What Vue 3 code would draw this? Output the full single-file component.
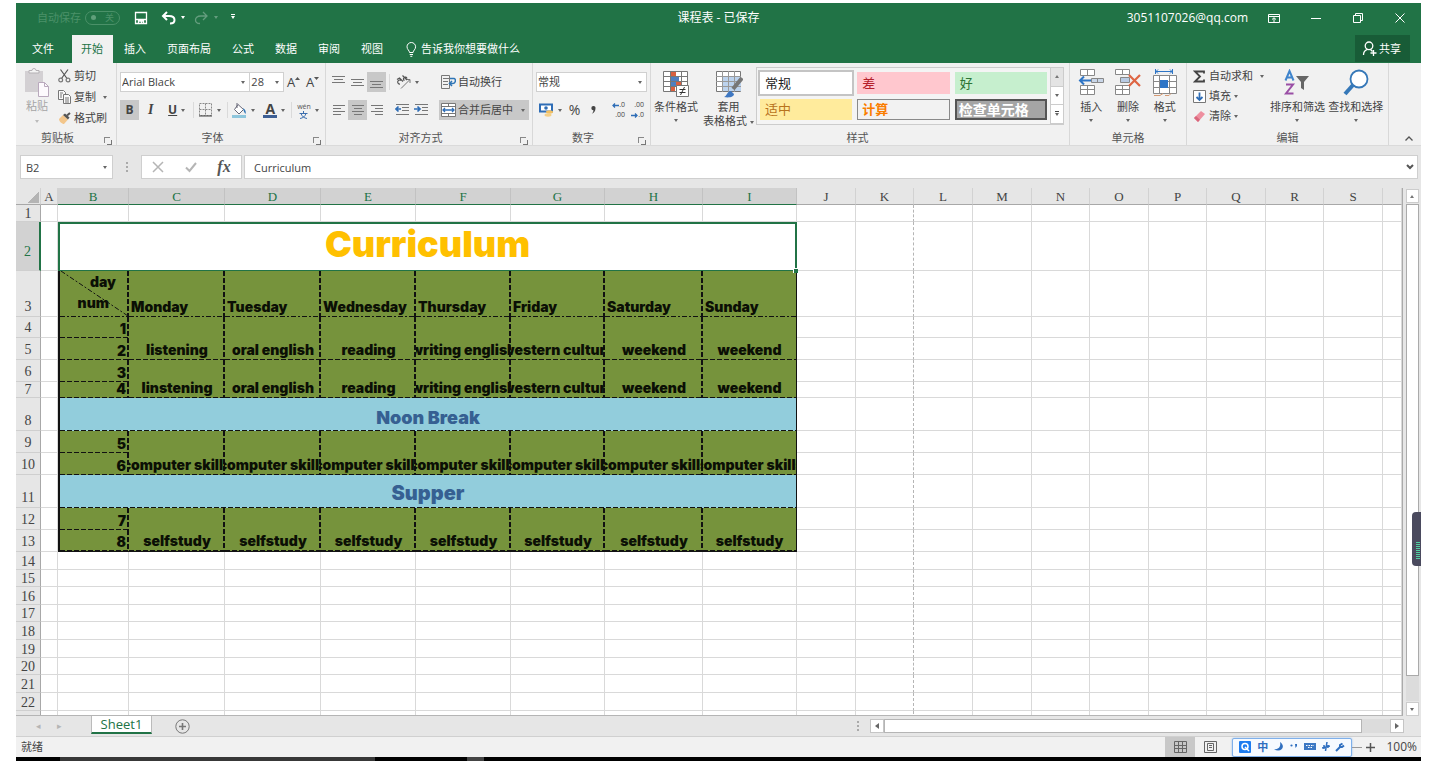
<script setup>
const cols = [
  ['', 25], ['A', 17], ['B', 71], ['C', 96], ['D', 96], ['E', 95], ['F', 95], ['G', 94], ['H', 98], ['I', 94],
  ['J', 59], ['K', 58], ['L', 59], ['M', 59], ['N', 58], ['O', 59], ['P', 58], ['Q', 59], ['R', 58], ['S', 59], ['', 0],
].map(([name, width], i) => ({ name, width, selected: i >= 2 && i <= 9 }))

const week = (list) => list.map((text) => ({ text, rowspan: 2, kind: 'green center' }))
const num = (n, last) => ({ text: n, kind: 'green number' + (last ? ' last' : '') })
const lessons = (first) => week([first, 'oral english', 'reading', 'writing english', 'western culture', 'weekend', 'weekend'])
const all = (t) => week(Array(7).fill(t))
const days = ['Monday', 'Tuesday', 'Wednesday', 'Thursday', 'Friday', 'Saturday', 'Sunday']

const content = {
  2: [{ text: 'Curriculum', colspan: 8, kind: 'title' }],
  3: [{ corner: true, kind: 'green corner' }, ...days.map((text) => ({ text, kind: 'green day' }))],
  4: [num(1), ...lessons('listening')],
  5: [num(2, true)],
  6: [num(3), ...lessons('linstening')],
  7: [num(4, true)],
  8: [{ text: 'Noon Break', colspan: 8, kind: 'break noon' }],
  9: [num(5), ...all('computer skills')],
  10: [num(6, true)],
  11: [{ text: 'Supper', colspan: 8, kind: 'break supper' }],
  12: [num(7), ...all('selfstudy')],
  13: [num(8, true)],
}
const heights = [17, 49, 46, 21, 22, 22, 16, 33, 22, 22, 33, 22, 22, 18, 17, 18, 17, 18, 18, 17, 18, 18, 18]
const rows = heights.map((height, i) => ({
  n: i + 1,
  height,
  cells: content[i + 1] || [],
  lead: content[i + 1] ? 0 : 8,
}))

const tabs = ['插入', '页面布局', '公式', '数据', '审阅', '视图']
const styles = [
  ['常规', 'normal'], ['差', 'bad'], ['好', 'good'],
  ['适中', 'neutral'], ['计算', 'calc'], ['检查单元格', 'check'],
]
</script>

<template>
  <div class="screen">
    <div class="app">
      <header class="titlebar">
        <div class="quick">
          <span class="faint">自动保存</span>
          <button class="toggle" aria-label="自动保存"><i></i><b>关</b></button>
          <button aria-label="保存" class="save">
            <svg width="14" height="14" viewBox="0 0 14 14" fill="none" stroke="#fff" stroke-width="1.3"><path d="M1.500 1.500h11v11h-11zM1.500 8.500h11M4.500 12v-2h5v2M7.500 10v2" /></svg>
          </button>
          <button aria-label="撤消" class="undo">
            <svg width="15" height="14" viewBox="0 0 15 14" fill="none" stroke="#fff" stroke-width="2"><path d="M6 1L2 5l4 4M2 5h6c4 0 5.500 2 5.500 4S12 12.500 9 12.500" /></svg>
            <i class="caret white"></i>
          </button>
          <button aria-label="恢复" class="undo dim">
            <svg width="15" height="14" viewBox="0 0 15 14" fill="none" stroke="#fff" stroke-width="1.300"><path d="M9 1l4 4-4 4M13 5H7C3 5 1.500 7 1.500 9S3 12.500 6 12.500" /></svg>
            <i class="caret white"></i>
          </button>
          <button aria-label="自定义快速访问工具栏" class="more"><i class="caret white bar"></i></button>
        </div>
        <div class="doc">课程表 - 已保存</div>
        <div class="account">
          <span class="mail">3051107026@qq.com</span>
          <button aria-label="功能区显示选项"><svg width="12" height="10" viewBox="0 0 12 10" fill="none" stroke="#fff"><path d="M.5 1.500h11v8H.5zM.5 3.500h11M6 9V5M4 6.500L6 4.700l2 1.800" /></svg></button>
          <button aria-label="最小化"><svg width="10" height="10" viewBox="0 0 10 10" stroke="#fff"><path d="M0 5.500h10" /></svg></button>
          <button aria-label="还原"><svg width="10" height="10" viewBox="0 0 10 10" fill="none" stroke="#fff"><path d="M.5 2.500h7v7h-7zM2.500 2.500v-2h7v7h-2" /></svg></button>
          <button aria-label="关闭"><svg width="10" height="10" viewBox="0 0 10 10" stroke="#fff"><path d="M.5.500l9 9M9.500.500l-9 9" /></svg></button>
        </div>
      </header>

      <nav class="tabs">
        <button class="file">文件</button>
        <button class="active">开始</button>
        <button v-for="t in tabs" :key="t">{{ t }}</button>
        <button class="tell">
          <svg width="11" height="15" viewBox="0 0 11 15" fill="none" stroke="#fff"><path d="M3.500 10.500C3.500 8.500 1 7.500 1 4.800a4.300 4.300 0 018.600 0c0 2.700-2.500 3.700-2.500 5.700zM3.700 12.500h3.300M4.300 14.300h2" /></svg>
          告诉我你想要做什么
        </button>
        <button class="share">
          <svg width="15" height="15" viewBox="0 0 15 15" fill="none" stroke="#fff" stroke-width="1.300"><circle cx="7" cy="4.800" r="3.800" /><path d="M1.500 14c0-3 2-5 4-5.600M8.500 8.500l2 2M11.500 9v6M8.500 12h6" /></svg>
          共享
        </button>
      </nav>

      <section class="ribbon">
        <div class="group clip">
          <div class="body">
            <button class="big paste">
              <svg width="26" height="30" viewBox="0 0 26 30"><path d="M1 3h18v21H1z" fill="#d3d0d3" /><path d="M5 5V2.500h3a2 2 0 014 0h3V5z" fill="#f4f4f4" stroke="#b5b1b5" /><path d="M14.500 14.500h6l4 4v10h-10z" fill="#fdfafd" stroke="#b9a9bd" /><path d="M20.500 14.500v4h4" fill="none" stroke="#b9a9bd" /></svg>
              <span>粘贴</span><i class="caret"></i>
            </button>
            <div class="stack">
              <button><svg width="13" height="14" viewBox="0 0 13 14" fill="none" stroke="#555" stroke-width="1.200"><path d="M2.500.500l6.500 9M10 .500L3.500 9.500" /><circle cx="2.700" cy="11" r="1.900" stroke="#777" /><circle cx="10" cy="11" r="1.900" stroke="#777" /></svg>剪切</button>
              <button><svg width="13" height="14" viewBox="0 0 13 14" fill="#fafafa" stroke="#777"><path d="M.5.500h5l2 2v7h-7z" /><path d="M5.500 4.500h5l2 2v7h-7z" /><path d="M7 8h4M7 10h4M7 12h4M2 3h3M2 5h2M2 7h2" /></svg>复制<i class="caret far"></i></button>
              <button><svg width="13" height="13" viewBox="0 0 13 13"><path d="M1 7l4-4 5 4.500L6 12C4 12 1 9.500 1 7z" fill="#f3c68b" /><path d="M5 3l2-1.500 4.500 4L10 7.500z" fill="#555" /><path d="M9 3.500L12 1" stroke="#555" stroke-width="2" /></svg>格式刷</button>
            </div>
          </div>
          <footer class="has-launch">剪贴板<i class="launch"></i></footer>
        </div>

        <div class="group font">
          <div class="body col">
            <div class="line">
              <span class="pick wide"><select aria-label="字体"><option>Arial Black</option></select><i class="caret"></i></span>
              <span class="pick small"><select aria-label="字号"><option>28</option></select><i class="caret"></i></span>
              <button class="sz" aria-label="增大字号">A<svg width="5" height="4" viewBox="0 0 5 4"><path d="M0 3L2.500 0 5 3z" fill="#555" /></svg></button>
              <button class="sz" aria-label="减小字号">A<svg width="5" height="4" viewBox="0 0 5 4"><path d="M0 0L2.500 3 5 0z" fill="#555" /></svg></button>
            </div>
            <div class="line second">
              <button class="tool on"><b>B</b></button>
              <button class="tool"><em>I</em></button>
              <button class="tool with"><u>U</u><i class="caret"></i></button>
              <i class="sep"></i>
              <button class="tool with" aria-label="边框"><svg width="14" height="14" viewBox="0 0 14 14" fill="none" stroke="#888"><path d="M.5.500h12v12H.5zM6.500.500v12M.5 6.500h12" stroke-dasharray="2 1" /><path d="M0 13h13" stroke="#444" /></svg><i class="caret"></i></button>
              <i class="sep"></i>
              <button class="tool with" aria-label="填充颜色"><svg width="15" height="15" viewBox="0 0 15 15"><path d="M6 1.500l5.500 5L7 11 2.500 6.500z" fill="#fff" stroke="#667" /><path d="M5 0v5" stroke="#667" /><path d="M11 5c3 2 3 4 2.500 6-1-1-2-3-2.500-6z" fill="#2e75b6" /><path d="M0 12h14v3H0z" fill="#8ec6dc" /></svg><i class="caret"></i></button>
              <button class="tool with" aria-label="字体颜色"><span class="fc">A</span><i class="caret"></i></button>
              <i class="sep"></i>
              <button class="tool with" aria-label="拼音"><span class="py"><small>wén</small><svg width="9" height="8" viewBox="0 0 9 8" fill="none" stroke="#3c6eae"><path d="M4.500 0v2M.5 2.500h8M2 2.500c1 3 3 4.500 6 5M7 2.500c-1 3-3 4.500-6 5" /></svg></span><i class="caret"></i></button>
            </div>
          </div>
          <footer class="has-launch">字体<i class="launch"></i></footer>
        </div>

        <div class="group align">
          <div class="body col">
            <div class="line">
              <button class="tool" aria-label="顶端对齐"><svg width="13" height="14" viewBox="0 0 13 14" stroke="#777"><path d="M0 1.500h13M2 4.500h9M0 7.500h13" /></svg></button>
              <button class="tool" aria-label="垂直居中"><svg width="13" height="14" viewBox="0 0 13 14" stroke="#777"><path d="M0 4.500h13M2 7.500h9M0 10.500h13" /></svg></button>
              <button class="tool on" aria-label="底端对齐"><svg width="13" height="14" viewBox="0 0 13 14" stroke="#777"><path d="M0 6.500h13M2 9.500h9M0 12.500h13" /></svg></button>
              <i class="sep"></i>
              <button class="tool with orient" aria-label="方向"><svg width="15" height="14" viewBox="0 0 15 14" fill="none" stroke="#555"><path d="M5 13.500L13.500 5M10.500 4.500h3.500V8" stroke="#777" /><path d="M1 4.500l2.500-1.500 3.500 3.500M5 5.500a2 2 0 10-1 3.500M6.500.500l4.500 4.500M8.500 5.500a1.800 1.800 0 112.500-2" stroke-width="1.200" /></svg><i class="caret"></i></button>
              <button class="text wrap"><svg width="15" height="14" viewBox="0 0 15 14" fill="none"><path d="M.5.500h8v13h-8zM2 3.500h8M2 6.500h5M2 9.500h5" stroke="#777" /><path d="M9 3.500h4c2 0 2 5-1 5H9M11 6L8.500 8.500 11 11" stroke="#2e75b6" stroke-width="1.500" /></svg>自动换行</button>
            </div>
            <div class="line second">
              <button class="tool" aria-label="左对齐"><svg width="12" height="14" viewBox="0 0 12 14" stroke="#777"><path d="M0 2.500h12M0 5.500h8M0 8.500h12M0 11.500h8" /></svg></button>
              <button class="tool on" aria-label="居中"><svg width="12" height="14" viewBox="0 0 12 14" stroke="#777"><path d="M0 2.500h12M2 5.500h8M0 8.500h12M2 11.500h8" /></svg></button>
              <button class="tool" aria-label="右对齐"><svg width="12" height="14" viewBox="0 0 12 14" stroke="#777"><path d="M0 2.500h12M4 5.500h8M0 8.500h12M4 11.500h8" /></svg></button>
              <i class="sep"></i>
              <button class="tool" aria-label="减少缩进"><svg width="14" height="14" viewBox="0 0 14 14" fill="none" stroke="#777"><path d="M1 1.500h13M7 4.500h7M7 7.500h7M1 11.500h13" /><path d="M6 6H1M3.500 3.500L1 6l2.500 2.500" stroke="#2e6db6" stroke-width="1.700" /></svg></button>
              <button class="tool" aria-label="增加缩进"><svg width="14" height="14" viewBox="0 0 14 14" fill="none" stroke="#777"><path d="M1 1.500h13M8 4.500h6M8 7.500h6M1 11.500h13" /><path d="M0 6h6M3.500 3.500L6 6 3.500 8.500" stroke="#2e6db6" stroke-width="1.700" /></svg></button>
              <button class="text merge"><svg width="15" height="14" viewBox="0 0 15 14"><path d="M.5.500h14v13H.5z" fill="#fff" stroke="#777" /><path d="M7.500.500V4M7.500 10v3.500M.5 3.500h14M.5 10.500h14" stroke="#777" /><path d="M2 7h11M4 5L2 7l2 2M11 5l2 2-2 2" fill="none" stroke="#2e6db6" stroke-width="1.300" /></svg>合并后居中<i class="caret"></i></button>
            </div>
          </div>
          <footer class="has-launch">对齐方式<i class="launch"></i></footer>
        </div>

        <div class="group number-group">
          <div class="body col">
            <div class="line"><span class="pick full"><select aria-label="数字格式"><option>常规</option></select><i class="caret"></i></span></div>
            <div class="line second">
              <button class="tool with" aria-label="会计数字格式"><svg width="15" height="14" viewBox="0 0 15 14"><path d="M1 1.500h12v7H1z" fill="#fff" stroke="#2e6db6" stroke-width="2" /><circle cx="7" cy="5" r="1.800" fill="#2e6db6" /><ellipse cx="10.500" cy="9" rx="3.500" ry="1.700" fill="#f2c063" /><ellipse cx="9" cy="12" rx="3.500" ry="1.700" fill="#f5cf87" /></svg><i class="caret"></i></button>
              <button class="tool pct">%</button>
              <button class="tool" aria-label="千位分隔样式"><svg width="5" height="8" viewBox="0 0 5 8"><path d="M2.500 0a2 2 0 012 2.300C4.500 5 3 7 .8 7.800 2 6.500 2.500 5.500 2.400 4.200A2 2 0 012.500 0z" fill="#444" /></svg></button>
              <i class="sep"></i>
              <button class="tool dec"><span><svg width="7" height="5" viewBox="0 0 7 5" fill="none" stroke="#2e6db6" stroke-width="1.300"><path d="M7 2.500H1M3 .5l-2 2 2 2" /></svg>.0</span><span>.00</span></button>
              <button class="tool dec"><span>.00</span><span><svg width="7" height="5" viewBox="0 0 7 5" fill="none" stroke="#2e6db6" stroke-width="1.300"><path d="M0 2.500h6M4 .5l2 2-2 2" /></svg>.0</span></button>
            </div>
          </div>
          <footer class="has-launch">数字<i class="launch"></i></footer>
        </div>

        <div class="group style-group">
          <div class="body">
            <button class="big cond">
              <svg width="28" height="28" viewBox="0 0 28 28"><path d="M1.500 1.500h24v20h-24z" fill="#fff" stroke="#777" /><path d="M1 6.500h24M1 11.500h24M1 16.500h24M8.500 1v21M19.500 1v21" stroke="#777" /><path d="M9 2h5v4H9zM14 12h5v4h-5zM9 17h4v4H9z" fill="#d9603f" /><path d="M9 7h8v4H9zM9 12h5v4H9z" fill="#4f7fc0" /><path d="M14.500 15.500h12v11h-12z" fill="#fff" stroke="#777" /><path d="M17.500 19.500h6M17.500 22.500h6M22.500 17l-4 8" stroke="#333" /></svg>
              <span>条件格式</span><i class="caret"></i>
            </button>
            <button class="big tablefmt">
              <svg width="28" height="28" viewBox="0 0 28 28"><path d="M1.500 1.500h24v20h-24z" fill="#fff" stroke="#777" /><path d="M8 6h18v15H8z" fill="#bcd3ee" /><path d="M1 6.500h25M1 11.500h25M1 16.500h25M7.500 1v21M13.500 1v21M19.500 1v21" stroke="#999" /><path d="M27 8L18 19" stroke="#777" stroke-width="4" /><path d="M9 27c3-1 3-6 7-6l3 3c0 3-5 4-10 3z" fill="#3f78c2" /></svg>
              <span>套用<br />表格格式<i class="caret"></i></span>
            </button>
            <div class="gallery">
              <div class="swatches"><button v-for="s in styles" :key="s[1]" :class="s[1]">{{ s[0] }}</button></div>
              <div class="gscroll"><button aria-label="上"><i class="caret up"></i></button><button aria-label="下"><i class="caret"></i></button><button aria-label="其他"><i class="caret bar"></i></button></div>
            </div>
          </div>
          <footer>样式</footer>
        </div>

        <div class="group cells">
          <div class="body">
            <button class="big"><svg width="28" height="28" viewBox="0 0 28 28" fill="none" stroke="#888"><path d="M3.500.500h14v6h-14zM10.500.500v6M3.500 16.500h14v9h-14zM10.500 16.500v9M3.500 20.500h14" fill="#fff" /><path d="M14.500 9.500h12v4h-12zM20.500 9.500v4" fill="#c9d6e8" /><path d="M14 11.500H3M7 7.500l-4 4 4 4" stroke="#2e75c6" stroke-width="2" /></svg><span>插入</span><i class="caret"></i></button>
            <button class="big"><svg width="28" height="28" viewBox="0 0 28 28" fill="none" stroke="#888"><path d="M1.500.500h14v5h-14zM8.500.500v5M1.500 16.500h14v9h-14zM8.500 16.500v9M1.500 20.500h14" fill="#fff" /><path d="M6.500 8.500h9v5h-9z" fill="#b8cbe4" /><path d="M15 6l11 11M26 6L15 17" stroke="#de6543" stroke-width="2.200" /></svg><span>删除</span><i class="caret"></i></button>
            <button class="big"><svg width="28" height="28" viewBox="0 0 28 28" fill="none" stroke="#888"><path d="M2.500 6.500h23v18h-23zM8.500 6.500v18M18.500 6.500v18M2.500 12.500h23M2.500 18.500h23" fill="#fff" /><path d="M9 11h8v8H9z" fill="#2e75c6" stroke="none" /><path d="M4 2.500h18M4.500 0v5M21.500 0v5M7 .500l-2 2 2 2M19 .500l2 2-2 2" stroke="#2e75c6" /><path d="M3 26.500h6l3-2M14 26.500h4l2-2" stroke="#d79a72" /></svg><span>格式</span><i class="caret"></i></button>
          </div>
          <footer>单元格</footer>
        </div>

        <div class="group edit">
          <div class="body">
            <div class="stack">
              <button><svg width="13" height="13" viewBox="0 0 13 13" fill="none" stroke="#444" stroke-width="1.800"><path d="M11 3.500V1.500H2l5 5-5 5h9v-2" /></svg>自动求和<i class="caret far"></i></button>
              <button><svg width="13" height="13" viewBox="0 0 13 13" fill="#fff" stroke="#777"><path d="M.5.500h12v12H.5z" /><path d="M6.500 2.500v7M3.500 7l3 3 3-3" fill="none" stroke="#2e6db6" stroke-width="1.800" /></svg>填充<i class="caret"></i></button>
              <button><svg width="13" height="13" viewBox="0 0 13 13"><path d="M1 8l7-7 4 3-7 8z" fill="#ee8f9f" /><path d="M1 8l2-2 4 3.700L5 12z" fill="#d9667c" /></svg>清除<i class="caret"></i></button>
            </div>
            <button class="big sort"><svg width="28" height="28" viewBox="0 0 28 28" fill="none"><path d="M2.500 11.500L6.500 2l4 9.500M4 8.500h5" stroke="#3f84cc" stroke-width="2" /><path d="M3 15.500h7l-7 9h7.500" stroke="#9a4fa5" stroke-width="2" /><path d="M13 7h13l-5 6v8l-3-2v-6z" fill="#666" /></svg><span>排序和筛选</span><i class="caret"></i></button>
            <button class="big find"><svg width="28" height="28" viewBox="0 0 28 28" fill="none" stroke="#3678b8"><circle cx="17" cy="10" r="8.500" fill="#fff" stroke-width="1.800" /><path d="M11 16L3 25" stroke-width="4" /></svg><span>查找和选择</span><i class="caret"></i></button>
          </div>
          <footer>编辑</footer>
        </div>
        <button class="collapse" aria-label="折叠功能区"><svg width="8" height="5" viewBox="0 0 8 5" fill="none" stroke="#555" stroke-width="1.300"><path d="M.5 4.500L4 1l3.500 3.500" /></svg></button>
      </section>

      <section class="formula">
        <span class="pick namebox"><input aria-label="名称框" value="B2" /><i class="caret"></i></span>
        <i class="dots"></i>
        <div class="fx">
          <button aria-label="取消"><svg width="12" height="12" viewBox="0 0 12 12" stroke="#b5b5b5" stroke-width="1.500"><path d="M1 1l10 10M11 1L1 11" /></svg></button>
          <button aria-label="输入"><svg width="12" height="12" viewBox="0 0 12 12" fill="none" stroke="#b5b5b5" stroke-width="2"><path d="M1 6.500L4.500 10 11 2" /></svg></button>
          <button class="fn">fx</button>
        </div>
        <span class="pick content"><input aria-label="编辑栏" value="Curriculum" /><svg width="8" height="6" viewBox="0 0 8 6" fill="none" stroke="#555" stroke-width="2"><path d="M1 1l3 3 3-3" /></svg></span>
      </section>

      <main class="sheet">
        <div class="view">
          <table>
            <colgroup><col v-for="(c, i) in cols" :key="i" :style="c.width ? { width: c.width + 'px' } : {}" /></colgroup>
            <thead>
              <tr><th v-for="(c, i) in cols" :key="i" :class="{ sel: c.selected, all: i === 0 }">{{ c.name }}</th></tr>
            </thead>
            <tbody>
              <tr v-for="r in rows" :key="r.n" :style="{ height: r.height + 'px' }">
                <th :class="{ sel: r.n === 2, tall: r.height > 20 }"><div>{{ r.n }}</div></th>
                <td></td>
                <td v-for="(c, i) in r.cells" :key="'c' + i" :class="c.kind" :colspan="c.colspan" :rowspan="c.rowspan">
                  <template v-if="c.corner">
                    <svg class="diag" viewBox="0 0 71 46" preserveAspectRatio="none"><path d="M1 0L70 45" stroke="#111" stroke-dasharray="5 2 2 2" /></svg>
                    <div class="top">day</div><div class="low">num</div>
                  </template>
                  <div v-else class="txt"><span>{{ c.text }}</span></div>
                  <i v-if="r.n === 2" class="handle"></i>
                </td>
                <td v-for="k in r.lead" :key="'l' + k"></td>
                <td v-for="k in 11" :key="'t' + k" :class="{ page: k === 2 }"></td>
              </tr>
            </tbody>
          </table>
        </div>
        <div class="vscroll">
          <button aria-label="向上滚动"><i class="caret up"></i></button>
          <div class="track"><div class="thumb"></div></div>
          <button aria-label="向下滚动"><i class="caret"></i></button>
        </div>
        <div class="dock"><i></i></div>
      </main>

      <div class="sheetbar">
        <button class="nav" aria-label="上一张">◂</button>
        <button class="nav" aria-label="下一张">▸</button>
        <button class="sheettab">Sheet1</button>
        <button class="add" aria-label="新工作表"><svg width="15" height="15" viewBox="0 0 15 15" fill="none" stroke="#777"><circle cx="7.500" cy="7.500" r="6.700" /><path d="M7.500 4v7M4 7.500h7" stroke-width="1.600" /></svg></button>
        <div class="hscroll">
          <i class="dots"></i>
          <button aria-label="向左滚动"><i class="caret left"></i></button>
          <div class="hthumb"></div><div class="htrack"></div>
          <button aria-label="向右滚动"><i class="caret right"></i></button>
        </div>
      </div>

      <div class="status">
        <span>就绪</span>
        <div class="views">
          <button class="on" aria-label="普通"><svg width="13" height="12" viewBox="0 0 13 12" fill="none" stroke="#666"><path d="M.5.500h12v11H.5zM4.500.500v11M8.500.500v11M.5 4.500h12M.5 7.500h12" /></svg></button>
          <button aria-label="页面布局"><svg width="13" height="12" viewBox="0 0 13 12" fill="none" stroke="#666"><path d="M.5.500h12v11H.5zM3.500 2.500h6v7h-6zM5 4.500h3M5 6.500h3" /></svg></button>
        </div>
        <div class="ime">
          <svg width="12" height="12" viewBox="0 0 12 12"><rect width="12" height="12" rx="1" fill="#1d7cf0" /><circle cx="6" cy="5.500" r="3" fill="none" stroke="#fff" stroke-width="1.500" /><path d="M6 6l4 4" stroke="#fff" stroke-width="1.500" /></svg>
          <b>中</b>
          <svg width="10" height="10" viewBox="0 0 10 10"><path d="M6 0c6 4 2 11-6 7.500 5 0 7-3 6-7.500z" fill="#2f6fc0" /></svg>
          <svg width="8" height="10" viewBox="0 0 8 10" fill="#2f6fc0"><circle cx="1.500" cy="3.500" r="1.100" /><path d="M5 2h2v2L5.500 6z" /></svg>
          <svg width="12" height="10" viewBox="0 0 12 10"><path d="M0 1h12v7H0z" fill="#3c78c4" /><path d="M2 3.500h8M4 5.500h4" stroke="#fff" stroke-dasharray="1.500 1" /></svg>
          <svg width="8" height="10" viewBox="0 0 8 10" fill="none" stroke="#2f6fc0" stroke-width="1.500"><path d="M5 0L3.500 9M0 6l8-2M2 3v4M6 3v3" /></svg>
          <svg width="10" height="10" viewBox="0 0 10 10" fill="none" stroke="#2f6fc0" stroke-width="2"><path d="M1 9l4-4" /><path d="M7.500 1.500L5 3v2h2l2-1.500" /></svg>
        </div>
        <i class="rail"></i>
        <button class="plus" aria-label="放大"><svg width="9" height="9" viewBox="0 0 9 9" stroke="#555" stroke-width="1.500"><path d="M4.500 0v9M0 4.500h9" /></svg></button>
        <span class="zoom">100%</span>
      </div>
      <div class="taskbar"><i class="w1"></i><i class="w2"></i><i class="w3"></i><i class="w4"></i></div>
    </div>
  </div>
</template>

<style>
body { background: #fff; }
</style>

<style scoped>
* { box-sizing: border-box; }
.screen { height: 100vh; padding: 3px 11px 0 16px; }
.app { height: 100%; display: flex; flex-direction: column; overflow: hidden; font: 11px/14px "Open Sans", "Noto Sans CJK SC", sans-serif; color: #444; background: #e6e6e6; }
button { border: 0; padding: 0; margin: 0; background: none; font: inherit; color: inherit; display: flex; align-items: center; justify-content: center; white-space: nowrap; }
svg { display: block; flex: none; }
select, input { border: 0; outline: 0; background: none; appearance: none; padding: 0; margin: 0; font: inherit; color: #444; flex: 1; min-width: 0; height: 100%; }
.caret { width: 0; height: 0; flex: none; border: 2px solid transparent; border-top: 3px solid #666; border-bottom: 0; }
.caret.white { border-top-color: #fff; }
.caret.up { border-top: 0; border-bottom: 3px solid #777; }
.caret.left { border: 3px solid transparent; border-left: 0; border-right: 4px solid #666; }
.caret.right { border: 3px solid transparent; border-right: 0; border-left: 4px solid #666; }
.caret.bar { position: relative; }
.caret.bar::before { content: ""; position: absolute; left: -2px; top: -5px; width: 4px; height: 1px; background: currentColor; }

.titlebar { flex: none; height: 32px; background: #217346; color: #fff; display: grid; grid-template-columns: 1fr auto 1fr; align-items: center; padding-bottom: 3px; }
.quick { display: flex; align-items: center; padding-left: 21px; }
.faint { color: #4b9169; width: 48px; }
.toggle { width: 35px; height: 14px; border: 1px solid #4b9169; border-radius: 7px; justify-content: space-between; padding: 0 5px; color: #4b9169; font-size: 9px; }
.toggle i { width: 5px; height: 5px; border-radius: 50%; background: #5f9f7a; }
.toggle b { font-weight: 400; }
.save { margin-left: 14px; }
.undo { margin-left: 14px; gap: 5px; width: 24px; }
.save + .undo { margin-left: 13px; }
.undo.dim { opacity: .3; margin-left: 9px; }
.more { margin-left: 13px; }
.doc { font-size: 12px; }
.account { display: flex; justify-content: flex-end; align-items: center; font-size: 12px; padding-right: 15px; }
.account button { width: 12px; height: 14px; margin-left: 30px; }
.account .mail + button { margin-left: 20px; }

.tabs { flex: none; height: 28px; background: #217346; color: #fff; display: flex; align-items: stretch; }
.tabs button { padding: 0 10px 0 11px; }
.tabs .file { padding: 0 18px 0 16px; }
.tabs .active { background: #f1f1f1; color: #217346; padding: 0 10px 0 9px; }
.tabs .tell { gap: 4px; padding-left: 13px; }
.tabs .share { margin: 0 11px 1px auto; background: #185c37; padding: 0 9px 0 7px; gap: 2px; }

.ribbon { flex: none; height: 83px; background: #f1f1f1; border-bottom: 1px solid #dadada; display: flex; position: relative; }
.group { flex: none; display: flex; flex-direction: column; border-right: 1px solid #d8d8d8; padding: 4px 3px 0; }
.group footer { position: relative; height: 14px; margin-top: auto; text-align: center; color: #555; }
.group .has-launch { padding-right: 17px; }
.launch { position: absolute; right: 3px; bottom: 2px; width: 6px; height: 6px; border: solid #888; border-width: 1px 0 0 1px; }
.launch::after { content: ""; position: absolute; left: 2px; top: 2px; width: 4px; height: 4px; border: solid #777; border-width: 0 1px 1px 0; }
.body { display: flex; height: 60px; }
.body.col { flex-direction: column; padding-top: 5px; }
.line { display: flex; height: 20px; align-items: center; }
.line.second { margin-top: 8px; }
.clip { width: 101px; }
.font { width: 209px; }
.align { width: 207px; }
.number-group { width: 118px; }
.style-group { flex: 1 1 418px; padding: 4px 5px 0 0; }
.cells { width: 117px; }
.edit { width: 202px; }
.big { flex-direction: column; justify-content: flex-start; padding-top: 2px; }
.big span { text-align: center; margin: 3px 0 5px; line-height: 14px; }
.paste { width: 36px; color: #a5a5a5; }
.paste span { margin-top: 1px; margin-bottom: 7px; }
.paste svg { margin-top: -1px; }
.paste .caret { border-top-color: #bbb; }
.stack { display: flex; flex-direction: column; justify-content: space-between; height: 54px; margin: 2px 0 0 3px; }
.clip .stack { height: 56px; }
.stack button { justify-content: flex-start; gap: 3px; }
.stack .far { margin-left: 4px; }
.pick { display: flex; align-items: center; background: #fff; border: 1px solid #d0d0d0; height: 20px; padding: 0 4px 0 2px; }
.pick.wide { width: 131px; }
.pick.small { width: 34px; border-left: 0; }
.line .pick { padding-left: 1px; }
.pick.full { width: 113px; }
.sz { width: 19px; font-size: 13px; }
.sz svg { align-self: flex-start; margin-top: 2px; }
.tool { width: 19px; height: 20px; flex: none; font-size: 12px; }
.tool.with { width: 28px; gap: 4px; }
.on { background: #c8c8c8; }
.tool em { font-family: "Liberation Serif", serif; font-weight: 700; font-size: 14px; }
.tool u { font-weight: 700; }
.sep { width: 1px; height: 16px; background: #dadada; margin: 0 3px; }
.font .second { justify-content: space-between; }
.font .sep { margin: 0; }
.fc { font-weight: 700; font-size: 14px; line-height: 12px; border-bottom: 3px solid #3d5f94; padding: 0 2px; }
.py { display: flex; flex-direction: column; align-items: center; }
.py small { font-size: 7px; color: #555; line-height: 9px; }
.text { height: 20px; gap: 2px; }
.wrap { margin-left: 20px; }
.merge { background: #c8c8c8; padding: 0 4px 0 2px; margin-left: 9px; gap: 2px; }
.merge .caret { margin-left: 6px; }
.pct { font-size: 14px; margin-left: 1px; }
.dec { flex-direction: column; font-size: 7px; line-height: 10px; align-items: flex-end; padding-right: 3px; }
.dec span { display: flex; align-items: center; }
.cond { width: 50px; }
.tablefmt { width: 55px; }
.tablefmt span .caret { display: inline-block; vertical-align: middle; margin-left: 3px; }
.style-group .big { padding-top: 3px; }
.style-group .big span { margin-top: 2px; }
.gallery { flex: 1; display: flex; height: 58px; border: 1px solid #ccc; background: #f4f4f4; }
.swatches { flex: 1; display: grid; grid-template-columns: repeat(3, 1fr); grid-template-rows: 1fr 1fr; gap: 5px; padding: 4px 3px; }
.swatches button { justify-content: flex-start; padding-left: 5px; font: 13px/16px "Noto Sans CJK SC", sans-serif; }
.normal { background: #fff; box-shadow: 0 0 0 2px #c4c4c4; color: #222; }
.bad { background: #ffc7ce; color: #b5202a; }
.good { background: #c6efce; color: #2c7434; }
.neutral { background: #ffeb9c; color: #b8731c; }
.calc { background: #f2f2f2; border: 1px solid #8a8a8a; color: #fa7d00; }
.check { background: #a5a5a5; border: 2px solid #555; color: #fff; }
.swatches .check, .swatches .calc { font-weight: 700; padding-left: 4px; }
.swatches .check { font-size: 14px; padding-left: 2px; }
.gscroll { width: 13px; display: flex; flex-direction: column; border-left: 1px solid #ccc; }
.gscroll button { flex: 1; border-bottom: 1px solid #ccc; background: #fff; }
.gscroll button:first-child { background: #e4e4e4; }
.cells .big { width: 37px; }
.edit .stack { width: 76px; }
.sort, .find { width: 59px; }
.collapse { margin-left: auto; width: 32px; height: 14px; align-self: flex-end; padding-left: 8px; }

.formula { flex: none; display: flex; align-items: center; height: 42px; padding: 0 3px 0 4px; }
.formula .pick, .fx { height: 24px; border-color: #cfcfcf; }
.formula .pick { padding: 0 5px; }
.namebox { width: 93px; }
.dots { width: 1px; height: 10px; border-left: 2px dotted #aaa; margin: 0 13px; flex: none; }
.fx { width: 101px; background: #fff; border: 1px solid #cfcfcf; display: flex; align-items: center; justify-content: space-around; margin-right: 2px; }
.fn { font: italic 700 16px/18px "Liberation Serif", serif; color: #555; }
.formula .content { flex: 1; padding: 0 3px 0 9px; }

.sheet { flex: 1; min-height: 0; display: flex; position: relative; }
.view { flex: 1; min-width: 0; overflow: hidden; background: #fff; border-right: 1px solid #aaa; border-bottom: 1px solid #b5b5b5; }
table { table-layout: fixed; width: 100%; border-collapse: separate; border-spacing: 0; }
td, th { padding: 0; }
th { font: 14px/15px "Liberation Serif", "Noto Sans CJK SC", serif; color: #444; background: #e6e6e6; vertical-align: bottom; }
thead th { height: 17px; font-size: 13px; border-right: 1px solid #d2d2d2; border-bottom: 1px solid #a8a8a8; }
thead th.sel { background: #d2d2d2; border-right-color: #c2c2c2; border-bottom-color: #217346; color: #217346; }
thead th.all { background: linear-gradient(135deg, transparent 50%, #b4b4b4 50%) 12px 4px / 11px 11px no-repeat #e6e6e6; }
tbody th { border-right: 1px solid #a8a8a8; border-bottom: 1px solid #cfcfcf; }
tbody th.tall { padding-bottom: 2px; }
tbody th.sel { background: #d2d2d2; color: #217346; border-right: 2px solid #217346; padding-bottom: 11px; }
td { border-right: 1px solid #d9d9d9; border-bottom: 1px solid #d9d9d9; }
td.page { border-right: 1px dashed #b5b5b5; }
td.green, td.break, td.title { border: 0; font-family: Inter, "Liberation Sans", sans-serif; font-weight: 900; color: #0b0f05; vertical-align: bottom; }
.txt { display: flex; justify-content: center; overflow-x: clip; white-space: nowrap; }
td.green { --v: repeating-linear-gradient(180deg, #111 0 5px, transparent 5px 7px); --h: repeating-linear-gradient(90deg, #111 0 5px, transparent 5px 7px); font-size: 14px; line-height: 12px; background: var(--v) right / 2px 100% no-repeat, var(--h) bottom / 100% 1px no-repeat, #76933c; }
td.green .txt { padding-bottom: 4px; }
td.number .txt { justify-content: flex-end; padding: 0 3px 3px 0; }
td.day .txt { justify-content: flex-start; padding-left: 2px; }
td.day, td.corner { --h: repeating-linear-gradient(90deg, #111 0 5px, transparent 5px 7px, #111 7px 9px, transparent 9px 11px); }
td.number, td.corner, td.break { border-left: 2px solid #111; }
td.center:nth-last-child(12), td.day:nth-last-child(12), td.break { border-right: 1px solid #111; }
td.center:nth-last-child(12), td.day:nth-last-child(12) { --v: linear-gradient(transparent, transparent); }
td.corner { position: relative; vertical-align: top; }
.diag { position: absolute; inset: 0; width: 100%; height: 100%; }
.top { padding: 5px 13px 0 0; text-align: right; }
.low { padding: 9px 20px 0 0; text-align: right; }
td.title { position: relative; border: 2px solid #217346; border-width: 2px 2px 1px; background: #fff; color: #ffc000; font-size: 36px; line-height: 40px; vertical-align: top; }
.handle { position: absolute; right: -3px; bottom: -3px; width: 5px; height: 5px; background: #217346; border: 1px solid #fff; border-width: 1px 0 0 1px; }
td.break { background: repeating-linear-gradient(90deg, #111 0 5px, transparent 5px 7px) bottom / 100% 1px no-repeat, #92cddc; color: #366092; font-size: 18px; line-height: 20px; }
td.break .txt { padding-bottom: 3px; }
td.supper { font-size: 20px; }
td.supper .txt { padding-bottom: 5px; }
tr:nth-child(13) td.green, tr:nth-child(12) td.center { border-bottom: 1px solid #111; }

.vscroll { width: 18px; flex: none; display: flex; flex-direction: column; align-items: center; padding: 1px 0 0; }
.vscroll button { width: 13px; height: 14px; background: #fff; border: 1px solid #ccc; flex: none; }
.track { flex: 1; width: 13px; background: #dcdcdc; margin: 1px 0; }
.thumb { height: 95%; background: #fff; border: 1px solid #aaa; }
.dock { position: absolute; right: 0; top: 324px; width: 9px; height: 54px; background: #4a4a5e; border-radius: 4px 0 0 4px; padding: 30px 1px 0 4px; }
.dock i { display: block; height: 18px; background: repeating-linear-gradient(180deg, #4fd0a0 0 1px, #4a4a5e 1px 2px); }

.sheetbar { flex: none; height: 21px; display: flex; align-items: flex-start; border-bottom: 1px solid #d0d0d0; }
.nav { width: 21px; height: 20px; color: #b5b5b5; font-size: 9px; }
.nav:first-child { margin-left: 12px; }
.sheettab { margin-left: 21px; width: 61px; height: 18px; background: #fff; border: solid #bbb; border-width: 0 1px 0; border-bottom: 2px solid #217346; color: #217346; font-size: 13px; line-height: 14px; }
.add { margin: 3px 0 0 23px; }
.hscroll { margin-left: auto; width: 564px; padding: 3px 17px 0 0; display: flex; align-items: center; }
.hscroll .dots { margin: 0 11px 0 0; }
.hscroll button { width: 14px; height: 14px; background: #fff; border: 1px solid #c5c5c5; flex: none; }
.hthumb { flex: 1; height: 14px; background: #fff; border: 1px solid #b5b5b5; }
.htrack { width: 28px; height: 14px; background: #dcdcdc; }

.status { flex: none; height: 20px; display: flex; align-items: center; background: #f1f1f1; padding: 0 4px 0 5px; }
.views { margin-left: auto; display: flex; }
.views button { width: 30px; height: 20px; }
.ime { width: 120px; height: 19px; margin-left: 7px; border: 1px solid #7fb0ea; border-radius: 2px; background: #f6faff; display: flex; align-items: center; justify-content: space-between; padding: 0 6px; color: #2f6fc0; box-shadow: 0 0 2px #8fb8ea; }
.rail { width: 10px; height: 1px; background: #999; }
.plus { margin: 0 11px 0 4px; }
.zoom { font-size: 12px; }
.taskbar { flex: none; height: 4px; background: #000; display: flex; }
.w1 { width: 44px; }
.w2 { width: 315px; background: #383838; }
.w3 { width: 92px; }
.w4 { width: 17px; background: #444; }
</style>
